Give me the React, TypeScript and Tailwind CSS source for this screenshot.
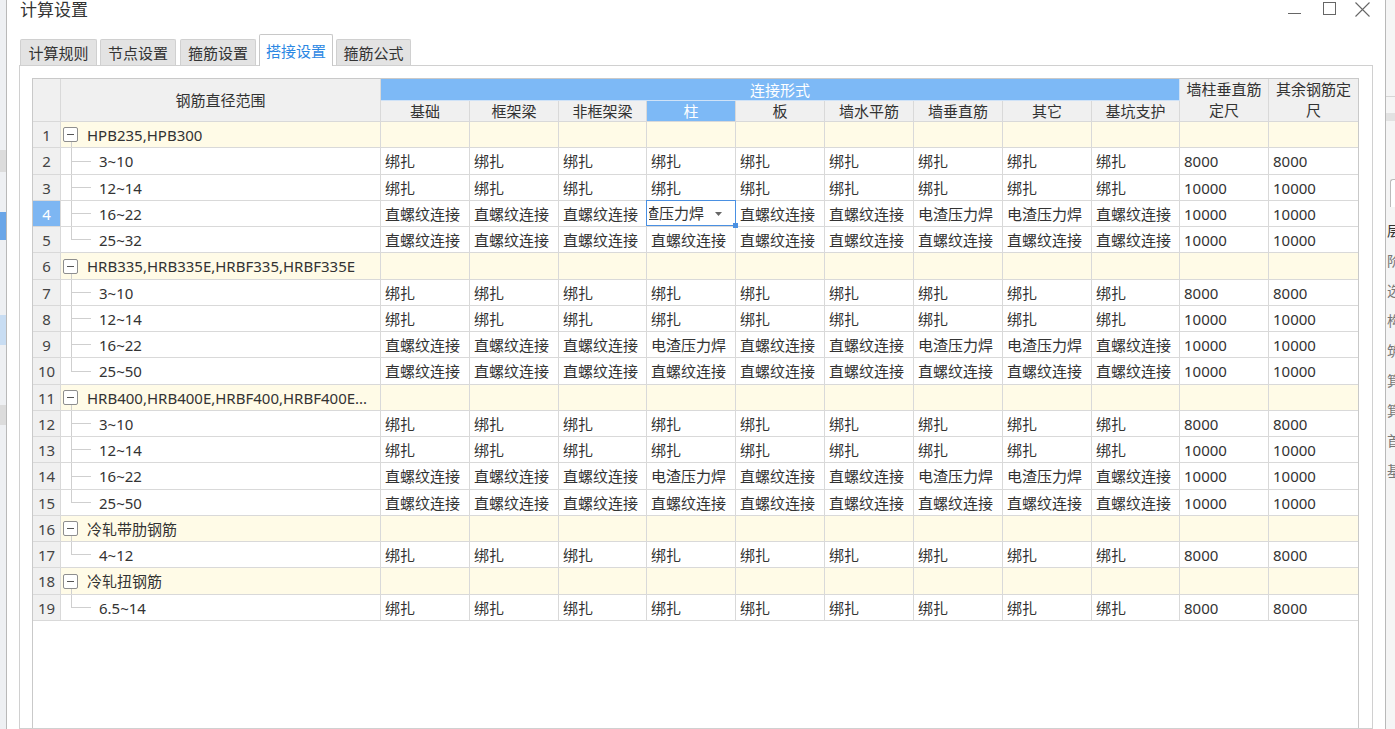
import React from "react"

type Row =
  | { kind: "group"; name: string }
  | { kind: "item"; name: string; vals: string[]; last: boolean }

const B = "绑扎"
const Z = "直螺纹连接"
const D = "电渣压力焊"
const SEL = "__sel__"

const COL_W = [
  "w-[89px]",
  "w-[89px]",
  "w-[88px]",
  "w-[89px]",
  "w-[89px]",
  "w-[89px]",
  "w-[89px]",
  "w-[89px]",
  "w-[88px]",
  "w-[89px]",
  "w-[89px]",
]

const SUB_HEADERS = ["基础", "框架梁", "非框架梁", "柱", "板", "墙水平筋", "墙垂直筋", "其它", "基坑支护"]

const nine = (v: string) => [v, v, v, v, v, v, v, v, v]

function buildRows(): Row[] {
  const rows: Row[] = []
  const group = (name: string, items: [string, string[]][]) => {
    rows.push({ kind: "group", name })
    items.forEach(([n, vals], i) => rows.push({ kind: "item", name: n, vals, last: i === items.length - 1 }))
  }
  group("HPB235,HPB300", [
    ["3~10", [...nine(B), "8000", "8000"]],
    ["12~14", [...nine(B), "10000", "10000"]],
    ["16~22", [Z, Z, Z, SEL, Z, Z, D, D, Z, "10000", "10000"]],
    ["25~32", [...nine(Z), "10000", "10000"]],
  ])
  group("HRB335,HRB335E,HRBF335,HRBF335E", [
    ["3~10", [...nine(B), "8000", "8000"]],
    ["12~14", [...nine(B), "10000", "10000"]],
    ["16~22", [Z, Z, Z, D, Z, Z, D, D, Z, "10000", "10000"]],
    ["25~50", [...nine(Z), "10000", "10000"]],
  ])
  group("HRB400,HRB400E,HRBF400,HRBF400E...", [
    ["3~10", [...nine(B), "8000", "8000"]],
    ["12~14", [...nine(B), "10000", "10000"]],
    ["16~22", [Z, Z, Z, D, Z, Z, D, D, Z, "10000", "10000"]],
    ["25~50", [...nine(Z), "10000", "10000"]],
  ])
  group("冷轧带肋钢筋", [["4~12", [...nine(B), "8000", "8000"]]])
  group("冷轧扭钢筋", [["6.5~14", [...nine(B), "8000", "8000"]]])
  return rows
}

const ROWS = buildRows()

function MinusBox() {
  return (
    <div className="w-[15px] h-[15px] border border-[#8e8e8e] rounded-[2px] bg-white flex items-center justify-center">
      <div className="w-[7px] h-[1px] bg-[#555]" />
    </div>
  )
}

function SelectedCell() {
  return (
    <div className="relative w-[89px] h-full border-r border-[#d9d9d9]">
      <div className="absolute -left-[1px] -top-[1px] right-[-1px] bottom-0 border border-[#4a90e2] bg-white flex items-center">
        <div className="ml-[2px] w-[62px] overflow-hidden whitespace-nowrap">
          <span className="-ml-[5px] inline-block">渣压力焊</span>
        </div>
        <svg width="7" height="4" viewBox="0 0 7 4" className="ml-[4px] mt-[1px]">
          <path d="M0 0 L7 0 L3.5 4 Z" fill="#666" />
        </svg>
        <div className="absolute -right-[3px] -bottom-[3px] w-[5px] h-[5px] bg-[#4a90e2]" />
      </div>
    </div>
  )
}

function GridRow({ row, index }: { row: Row; index: number }) {
  const tall = index % 4 === 1
  const selected = index === 3
  const isGroup = row.kind === "group"
  return (
    <div className={`flex border-b border-[#d9d9d9] ${tall ? "h-[27px]" : "h-[26px]"}`}>
      <div
        className={`w-[28px] shrink-0 border-r border-[#d9d9d9] flex items-center justify-center ${
          selected ? "bg-[#7db6f2] text-white" : "bg-[#f0f0f0] text-[#444]"
        }`}
      >
        {index + 1}
      </div>
      <div
        className={`w-[320px] shrink-0 border-r border-[#d9d9d9] flex h-full ${isGroup ? "bg-[#fffbe7]" : "bg-white"}`}
      >
        {row.kind === "group" ? (
          <>
            <div className="ml-[2px] w-[15px] flex flex-col h-full">
              <div className="flex-1" />
              <MinusBox />
              <div className="flex-1 ml-[8px] border-l border-[#cfcfcf]" />
            </div>
            <div className="ml-[9px] flex items-center whitespace-nowrap">{row.name}</div>
          </>
        ) : (
          <>
            <div className="w-[10px]" />
            <div className="w-[20px] flex flex-col h-full">
              <div className="flex-1 border-l border-b border-[#cfcfcf]" />
              <div className={`flex-1 ${row.last ? "" : "border-l border-[#cfcfcf]"}`} />
            </div>
            <div className="ml-[8px] flex items-center whitespace-nowrap">{row.name}</div>
          </>
        )}
      </div>
      {COL_W.map((w, c) => {
        const v = row.kind === "item" ? row.vals[c] : ""
        if (v === SEL) return <SelectedCell key={c} />
        return (
          <div
            key={c}
            className={`${w} shrink-0 h-full flex items-center pl-[4px] overflow-hidden whitespace-nowrap ${
              c < COL_W.length - 1 ? "border-r border-[#d9d9d9]" : ""
            } ${isGroup ? "bg-[#fffbe7]" : "bg-white"}`}
          >
            {v}
          </div>
        )
      })}
    </div>
  )
}

function Header() {
  return (
    <div className="flex h-[43px]">
      <div className="w-[28px] shrink-0 border-r border-b border-[#d9d9d9] bg-[#f0f0f0]" />
      <div className="w-[320px] shrink-0 border-r border-b border-[#d9d9d9] bg-[#f0f0f0] flex items-center justify-center">
        钢筋直径范围
      </div>
      <div className="flex flex-col w-[799px] shrink-0">
        <div className="h-[22px] bg-[#7db9f6] border-r border-b border-[#cfe2f7] text-white flex items-center justify-center">
          连接形式
        </div>
        <div className="flex h-[21px]">
          {SUB_HEADERS.map((h, c) => (
            <div
              key={h}
              className={`${COL_W[c]} shrink-0 border-r border-b border-[#d9d9d9] flex items-center justify-center ${
                c === 3 ? "bg-[#7db9f6] text-white" : "bg-[#f0f0f0]"
              }`}
            >
              {h}
            </div>
          ))}
        </div>
      </div>
      <div className="w-[89px] shrink-0 border-r border-b border-[#d9d9d9] bg-[#f0f0f0] flex flex-col items-center justify-center leading-[21px]">
        <span>墙柱垂直筋</span>
        <span>定尺</span>
      </div>
      <div className="w-[89px] shrink-0 border-b border-[#d9d9d9] bg-[#f0f0f0] flex flex-col items-center justify-center leading-[21px]">
        <span>其余钢筋定</span>
        <span>尺</span>
      </div>
    </div>
  )
}

const TABS = [
  { label: "计算规则", cls: "ml-0 w-[77px]" },
  { label: "节点设置", cls: "ml-[3px] w-[76px]" },
  { label: "箍筋设置", cls: "ml-[4px] w-[76px]" },
  { label: "搭接设置", cls: "ml-[3px] w-[74px]", active: true },
  { label: "箍筋公式", cls: "ml-[3px] w-[75px]" },
]

export default function App() {
  return (
    <div className="w-[1395px] h-[729px] flex overflow-hidden bg-white text-[#333] text-[15px] leading-[20px] font-['Noto_Sans','Noto_Sans_CJK_SC',sans-serif]">
      {/* app behind, left edge */}
      <div className="w-[6px] shrink-0 bg-[#eef0f3] flex flex-col">
        <div className="h-[150px]" />
        <div className="h-[22px] bg-[#dcdcdc]" />
        <div className="h-[40px]" />
        <div className="h-[28px] bg-[#6aa6e8]" />
        <div className="h-[75px]" />
        <div className="h-[30px] bg-[#c8ddf3]" />
        <div className="h-[60px]" />
        <div className="h-[20px] bg-[#dcdcdc]" />
      </div>

      {/* dialog */}
      <div className="w-[1380px] shrink-0 border-l border-r border-[#b9b9b9] bg-white flex flex-col">
        <div className="h-[30px] flex items-start pl-[13px]">
          <div className="text-[17px] leading-[20px] text-[#333]">计算设置</div>
          <div className="ml-auto flex items-start pt-[2px] pr-[15px]">
            <svg width="13" height="13" viewBox="0 0 13 13">
              <line x1="0" y1="11.5" x2="13" y2="11.5" stroke="#666" strokeWidth="1" />
            </svg>
            <svg width="13" height="13" viewBox="0 0 13 13" className="ml-[22px]">
              <rect x="0.5" y="0.5" width="12" height="12" fill="none" stroke="#666" strokeWidth="1" />
            </svg>
            <svg width="15" height="15" viewBox="0 0 15 15" className="ml-[19px]">
              <path d="M0.5 0.5 L14.5 14.5 M14.5 0.5 L0.5 14.5" stroke="#666" strokeWidth="1.1" />
            </svg>
          </div>
        </div>

        <div className="h-[35px] flex items-end pl-[13px] relative z-10">
          {TABS.map((t) =>
            t.active ? (
              <div
                key={t.label}
                className={`${t.cls} h-[32px] -mb-[1px] bg-white border border-b-0 border-[#c8c8c8] rounded-t-[2px] flex items-center justify-center text-[#2b87e3]`}
              >
                {t.label}
              </div>
            ) : (
              <div
                key={t.label}
                className={`${t.cls} h-[26px] bg-[#e3e3e3] border border-b-0 border-[#d0d0d0] rounded-t-[2px] flex items-center justify-center text-[#333]`}
              >
                {t.label}
              </div>
            )
          )}
        </div>

        <div className="ml-[12px] w-[1354px] flex-1 border border-[#d0d0d0] pt-[12px] pl-[12px] flex flex-col">
          <div className="w-[1327px] flex-1 border-l border-t border-r border-[#c9c9c9] flex flex-col">
            <Header />
            {ROWS.map((r, i) => (
              <GridRow key={i} row={r} index={i} />
            ))}
          </div>
        </div>
      </div>

      {/* app behind, right edge */}
      <div className="flex-1 bg-[#f5f5f5] flex flex-col overflow-hidden text-[14px] text-[#777]">
        <div className="h-[97px] border-b border-[#d6d6d6]" />
        <div className="h-[16px]" />
        <div className="h-[8px] bg-[#e2e2e2]" />
        <div className="h-[58px]" />
        <div className="h-[28px] ml-[4px] border-l border-t border-[#bbb] rounded-tl-[3px] bg-white" />
        <div className="h-[14px]" />
        <div className="flex flex-col gap-[10px] pl-[1px] whitespace-nowrap">
          <span className="text-[#333]">层</span>
          <span>阶</span>
          <span>选</span>
          <span>构</span>
          <span>筑</span>
          <span>箕</span>
          <span>箕</span>
          <span>首</span>
          <span>基</span>
        </div>
      </div>
    </div>
  )
}
